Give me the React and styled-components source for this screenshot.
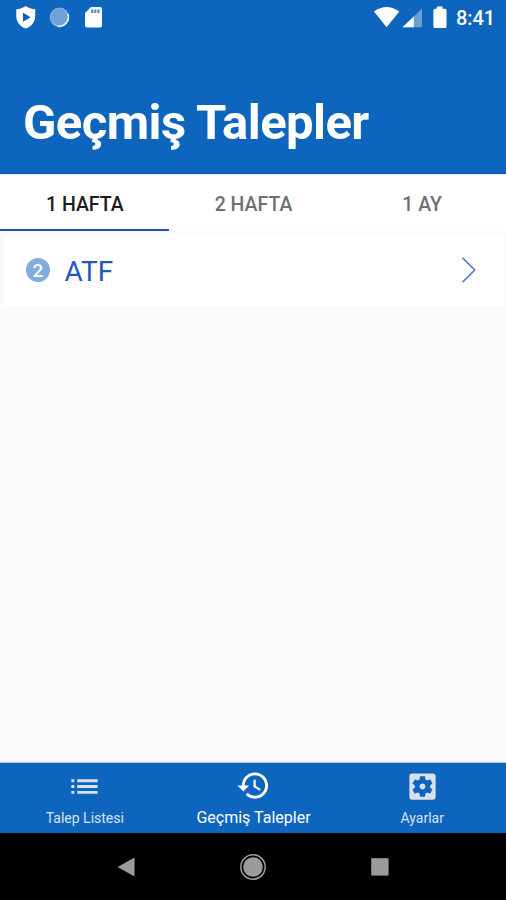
import React from 'react';
import styled, { createGlobalStyle } from 'styled-components';
import { MdList, MdHistory, MdSettingsApplications } from 'react-icons/md';

const GlobalStyle = createGlobalStyle`
  body {
    margin: 0;
    background: #fafafa;
    font-family: Roboto, sans-serif;
  }
`;

const Screen = styled.div`
  display: flex;
  flex-direction: column;
  width: 506px;
  height: 900px;
  overflow: hidden;
  background: #fafafa;
`;

const Header = styled.header`
  display: flex;
  flex-direction: column;
  box-sizing: border-box;
  height: 174px;
  background: #0d65bd;
  border-bottom: 1px solid #0a56b3;
`;

const StatusBar = styled.div`
  display: flex;
  justify-content: space-between;
  align-items: center;
  height: 36px;
  padding: 0 11px 0 14px;
`;

const StatusIcons = styled.svg`
  display: block;
  flex: none;
`;

const StatusRight = styled.div`
  display: flex;
  align-items: center;
`;

const Clock = styled.span`
  margin-left: 9px;
  color: #fff;
  font-size: 20px;
  font-weight: 500;
  line-height: 36px;
  letter-spacing: -0.1px;
`;

const Title = styled.h1`
  margin: 0;
  padding: 58px 0 0 23px;
  color: #fff;
  font-size: 49px;
  font-weight: 700;
  line-height: 58px;
  letter-spacing: -0.57px;
  white-space: nowrap;
`;

const Tabs = styled.div`
  display: flex;
  height: 57px;
  background: #fff;
  border-top: 1px solid #eaf0f9;
  box-sizing: border-box;
`;

const Tab = styled.div`
  flex: 1;
  box-sizing: border-box;
  padding: 1px 0 0 1px;
  border-bottom: 2px solid ${props => (props.$active ? '#2450b8' : 'transparent')};
  color: ${props => (props.$active ? '#1c1c1c' : '#707070')};
  font-size: 19.5px;
  font-weight: 500;
  line-height: 57px;
  text-align: center;
`;

const List = styled.main`
  flex: 1;
  padding: 4px 2px 0 4px;
`;

const Row = styled.div`
  display: flex;
  align-items: center;
  box-sizing: border-box;
  height: 71px;
  padding: 0 27px 1px 22px;
  background: #fff;
`;

const Badge = styled.span`
  width: 24px;
  height: 24px;
  border-radius: 50%;
  background: #80addb;
  color: #fff;
  font-size: 19px;
  font-weight: 500;
  line-height: 26px;
  text-align: center;
`;

const RowLabel = styled.span`
  flex: 1;
  margin-left: 14.5px;
  padding-top: 3px;
  color: #2459b8;
  font-size: 28px;
  line-height: 34px;
`;

const BottomNav = styled.nav`
  display: flex;
  height: 70px;
  background: #0d65bd;
  box-shadow: 0 -1px 1px #b8cce3;
`;

const NavItem = styled.div`
  display: flex;
  flex: 1;
  flex-direction: column;
  align-items: center;
  justify-content: flex-end;
  padding: 0 0 5px 1px;
  color: ${props => (props.$active ? '#fff' : '#d9e0ee')};

  svg {
    display: block;
  }
`;

const NavLabel = styled.span`
  margin-top: ${props => (props.$active ? '5px' : '4px')};
  font-size: ${props => (props.$active ? '16px' : '14px')};
  line-height: 20px;
  white-space: nowrap;
`;

const SystemBar = styled.div`
  display: flex;
  align-items: center;
  justify-content: space-around;
  height: 67px;
  padding: 0 63px;
  background: #000;
`;

const tabs = ['1 HAFTA', '2 HAFTA', '1 AY'];

const navItems = [
  { label: 'Talep Listesi', Icon: MdList },
  { label: 'Geçmiş Talepler', Icon: MdHistory },
  { label: 'Ayarlar', Icon: MdSettingsApplications },
];

// shield, sync circle and sd card
const Notifications = () => (
  <StatusIcons width="92" height="36" viewBox="14 0 92 36">
    <path d="M25.7 6 C22 8.5 19 9 16.3 9.3 V16 C16.3 22 20 26.5 25.7 28.5 C31.5 26.5 35.2 22 35.2 16 V9.3 C32.4 9 29.4 8.5 25.7 6Z" fill="#fff" />
    <path d="M23 12.8 L30.6 17.3 L23 21.8Z" fill="#0d5fba" />
    <circle cx="59.5" cy="17.3" r="9.7" fill="#94b9e2" />
    <path d="M67.8 14 A9.2 9.2 0 0 1 57.5 26.2" fill="none" stroke="#e4f0fa" strokeWidth="1.6" />
    <circle cx="59" cy="16.8" r="8.5" fill="#6fa2d9" />
    <path d="M91 7 H100 Q102 7 102 9 V25.5 Q102 27.5 100 27.5 H87 Q85 27.5 85 25.5 V13Z" fill="#fff" />
    <path d="M91.3 9.5h2v3.5h-2z M94.4 9.5h2v3.5h-2z M97.5 9.5h2v3.5h-2z" fill="#4784c7" />
  </StatusIcons>
);

// wifi, signal and battery
const Signals = () => (
  <StatusIcons width="74" height="36" viewBox="373 0 74 36">
    <path d="M374 11.5 Q386.5 2.5 399.3 11.5 L386.6 27.2Z" fill="#fff" />
    <path d="M422 8.5 V27.3 H402.5Z" fill="#6a9fd6" />
    <path d="M413.8 16.4 V27.3 H402.5Z" fill="#fff" />
    <path d="M436.8 6.5 H442.5 V8.7 H445 Q446.5 8.7 446.5 10.2 V26.5 Q446.5 28 445 28 H435 Q433.4 28 433.4 26.5 V10.2 Q433.4 8.7 435 8.7 H436.8Z" fill="#fff" />
  </StatusIcons>
);

const App = () => (
  <>
    <GlobalStyle />
    <Screen>
      <Header>
        <StatusBar>
          <Notifications />
          <StatusRight>
            <Signals />
            <Clock>8:41</Clock>
          </StatusRight>
        </StatusBar>
        <Title>Geçmiş Talepler</Title>
      </Header>
      <Tabs>
        {tabs.map((tab, i) => (
          <Tab key={tab} $active={i === 0}>{tab}</Tab>
        ))}
      </Tabs>
      <List>
        <Row>
          <Badge>2</Badge>
          <RowLabel>ATF</RowLabel>
          <svg width="16" height="28" viewBox="0 0 16 28">
            <path d="M1.5 1.8 L13.8 14 L1.5 26.2" fill="none" stroke="#3f6fc2" strokeWidth="1.4" />
          </svg>
        </Row>
      </List>
      <BottomNav>
        {navItems.map(({ label, Icon }, i) => (
          <NavItem key={label} $active={i === 1}>
            <Icon size={35} />
            <NavLabel $active={i === 1}>{label}</NavLabel>
          </NavItem>
        ))}
      </BottomNav>
      <SystemBar>
        <svg width="28" height="28" viewBox="0 0 28 28">
          <path d="M5.5 14 L22.5 4.5 V23.5Z" fill="#9b9b9b" />
        </svg>
        <svg width="28" height="28" viewBox="0 0 28 28">
          <circle cx="14" cy="14" r="12.2" fill="none" stroke="#9b9b9b" strokeWidth="1.5" />
          <circle cx="14" cy="14" r="9.8" fill="#9b9b9b" />
        </svg>
        <svg width="28" height="28" viewBox="0 0 28 28">
          <path d="M5.2 5.2 H22.6 V22.6 H5.2Z" fill="#9b9b9b" />
        </svg>
      </SystemBar>
    </Screen>
  </>
);

export default App;
